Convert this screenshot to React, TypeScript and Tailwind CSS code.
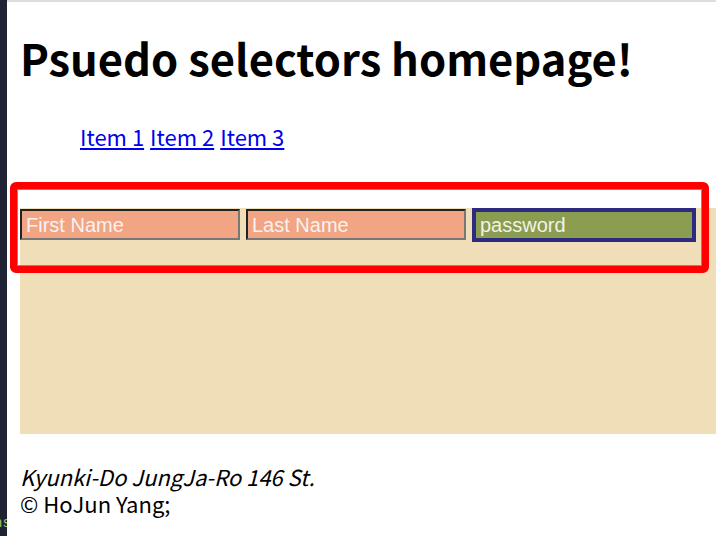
import React from 'react';

const sans = { fontFamily: '"Noto Sans CJK KR", "Noto Sans", sans-serif' };

export default function App() {
  return (
    <div className="relative flex h-[536px] w-[716px] overflow-hidden bg-white">
      {/* editor strip on the left */}
      <div className="flex w-[7px] shrink-0 flex-col justify-end overflow-hidden bg-[#1f2333]">
        <span className="mb-[6px] -ml-[6px] text-[14px] leading-none text-[#9cc46b] font-['Liberation_Mono',monospace]">ns</span>
      </div>

      <div className="flex flex-1 flex-col">
        <div className="h-[2px] bg-[#dcdce1]" />
        <div className="pl-[13px] text-black" style={sans}>
          <h1 className="mt-[28px] text-[43.5px] font-bold leading-[56px]">Psuedo selectors homepage!</h1>

          <ul className="mt-[36px] flex gap-[6px] pl-[60px] text-[22px] leading-[28px]">
            <li><a href="#" className="text-[#0000ee] underline">Item 1</a></li>
            <li><a href="#" className="text-[#0000ee] underline">Item 2</a></li>
            <li><a href="#" className="text-[#0000ee] underline">Item 3</a></li>
          </ul>

          <form className="mt-[58px] h-[226px] bg-[#f0deb9] pt-[1px] font-['Liberation_Sans',Arial,sans-serif]">
            <div className="flex items-start gap-[6px]">
              <input
                placeholder="First Name"
                className="h-[31px] w-[220px] border-2 border-t-[#222] border-l-[#222] border-b-[#777] border-r-[#777] bg-[#f1a583] px-[4px] pt-[1px] text-[20px] text-white outline-none placeholder:text-[#f7f2f2]"
              />
              <input
                placeholder="Last Name"
                className="h-[31px] w-[220px] border-2 border-t-[#222] border-l-[#222] border-b-[#777] border-r-[#777] bg-[#f1a583] px-[4px] pt-[1px] text-[20px] text-white outline-none placeholder:text-[#f7f2f2]"
              />
              <input
                type="text"
                placeholder="password"
                className="-mt-[1px] h-[34px] w-[224px] border-[4px] border-[#2e2a7f] bg-[#8b9d50] px-[4px] text-[20px] text-white outline-none placeholder:text-[#f3f2e6]"
              />
            </div>
          </form>

          <footer className="mt-[29px] text-[22px] leading-[27px]">
            <p className="italic">Kyunki-Do JungJa-Ro 146 St.</p>
            <p>© HoJun Yang;</p>
          </footer>
        </div>
      </div>

      {/* red annotation box laid over the form */}
      <div className="pointer-events-none absolute left-[10px] top-[182px] h-[91px] w-[699px] rounded-[6px] border-[7px] border-[#ff0000]">
        <div className="h-full w-full border border-[#8a8a8a]" />
      </div>
    </div>
  );
}
